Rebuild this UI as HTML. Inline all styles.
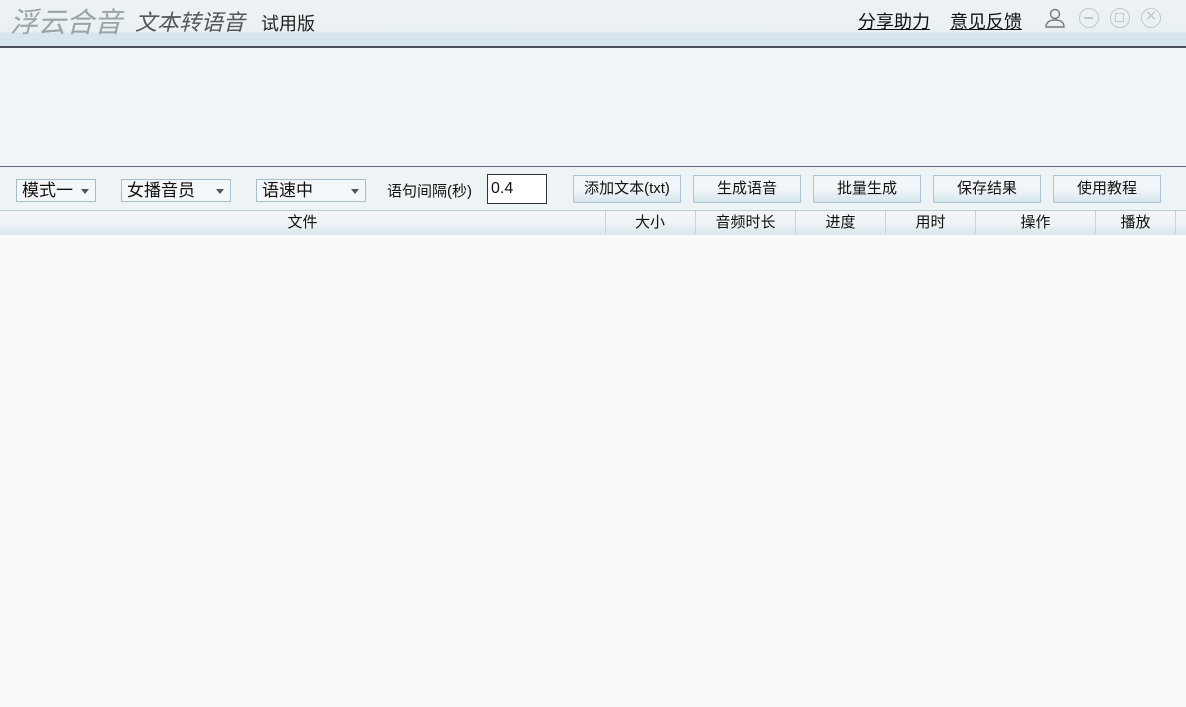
<!DOCTYPE html>
<html><head><meta charset="utf-8"><style>
*{margin:0;padding:0;box-sizing:border-box}
body{width:1186px;height:707px;background:#f9f9f9;font-family:"Liberation Sans","Noto Sans CJK SC",sans-serif;position:relative;overflow:hidden;color:#111}
.a{position:absolute}
.tb{left:0;top:0;width:1186px;height:47px;background:linear-gradient(#eef3f5 0,#e9f0f3 32px,#d7e6ec 33px,#d7e6ec 46px)}
.l1{left:0;top:46px;width:1186px;height:2px;background:#4a4e55}
.ban{left:0;top:48px;width:1186px;height:118px;background:#f1f5f7}
.l2{left:0;top:166px;width:1186px;height:1px;background:#5a6a80}
.tool{left:0;top:167px;width:1186px;height:43px;background:#eef3f5}
.hdr{left:0;top:210px;width:1186px;height:25px;background:linear-gradient(#f3f6f8 0,#eef3f5 12px,#d9e7ec 24px);border-top:1px solid #b9cbd6}
.sel{height:23px;border:1px solid #a9bccc;background:#f4f7f9;font-size:17px;line-height:21px;padding-left:5px}
.sel:after{content:"";position:absolute;right:6px;top:9px;border:4px solid transparent;border-top:5px solid #555}
.btn{top:175px;height:28px;border:1px solid #a9c4d4;background:linear-gradient(#f2f6f8 50%,#d6e6ec);font-size:15px;text-align:center;line-height:26px}
.col{top:211px;height:23px;font-size:15px;line-height:23px;text-align:center;border-left:1px solid #c3d3dd}
.lk{top:8px;font-size:18px;text-decoration:underline;color:#111}
.ic{top:8px;width:20px;height:20px;border:1.5px solid #c0c9ce;border-radius:50%}
</style></head><body>
<div class="a tb"></div><div class="a l1"></div><div class="a ban"></div><div class="a l2"></div><div class="a tool"></div><div class="a hdr"></div>
<div class="a" style="left:10px;top:1px;font-size:28px;font-style:italic;color:#9aa3a6">浮云合音</div>
<div class="a" style="left:135px;top:5px;font-size:22px;font-style:italic;color:#555">文本转语音</div>
<div class="a" style="left:261px;top:10px;font-size:18px;color:#222">试用版</div>
<div class="a lk" style="left:858px">分享助力</div>
<div class="a lk" style="left:950px">意见反馈</div>
<svg class="a" style="left:1044px;top:7px" width="22" height="22" viewBox="0 0 22 22" fill="none" stroke="#777" stroke-width="1.4"><circle cx="11" cy="7" r="4.5"/><path d="M2 20c0-5 4-7 9-7s9 2 9 7z"/></svg>
<div class="a ic" style="left:1079px"><div class="a" style="left:4px;top:8px;width:9px;height:1.5px;background:#c0c9ce"></div></div>
<div class="a ic" style="left:1110px"><div class="a" style="left:4px;top:4px;width:9px;height:9px;border:1.5px solid #c0c9ce"></div></div>
<div class="a ic" style="left:1141px;text-align:center;line-height:16px;color:#c0c9ce;font-size:15px">✕</div>
<div class="a sel" style="left:16px;top:179px;width:80px">模式一</div>
<div class="a sel" style="left:121px;top:179px;width:110px">女播音员</div>
<div class="a sel" style="left:256px;top:179px;width:110px">语速中</div>
<div class="a" style="left:387px;top:180px;font-size:15px">语句间隔(秒)</div>
<div class="a" style="left:487px;top:174px;width:60px;height:30px;border:1px solid #333;background:#fff;font-size:16px;line-height:28px;padding-left:3px">0.4</div>
<div class="a btn" style="left:573px;width:108px">添加文本(txt)</div>
<div class="a btn" style="left:693px;width:108px">生成语音</div>
<div class="a btn" style="left:813px;width:108px">批量生成</div>
<div class="a btn" style="left:933px;width:108px">保存结果</div>
<div class="a btn" style="left:1053px;width:108px">使用教程</div>
<div class="a col" style="left:0;width:605px;border-left:none">文件</div>
<div class="a col" style="left:605px;width:90px;text-align:right;padding-right:30px">大小</div>
<div class="a col" style="left:695px;width:100px">音频时长</div>
<div class="a col" style="left:795px;width:90px">进度</div>
<div class="a col" style="left:885px;width:90px">用时</div>
<div class="a col" style="left:975px;width:120px">操作</div>
<div class="a col" style="left:1095px;width:80px">播放</div>
<div class="a col" style="left:1175px;width:11px"></div>
</body></html>
